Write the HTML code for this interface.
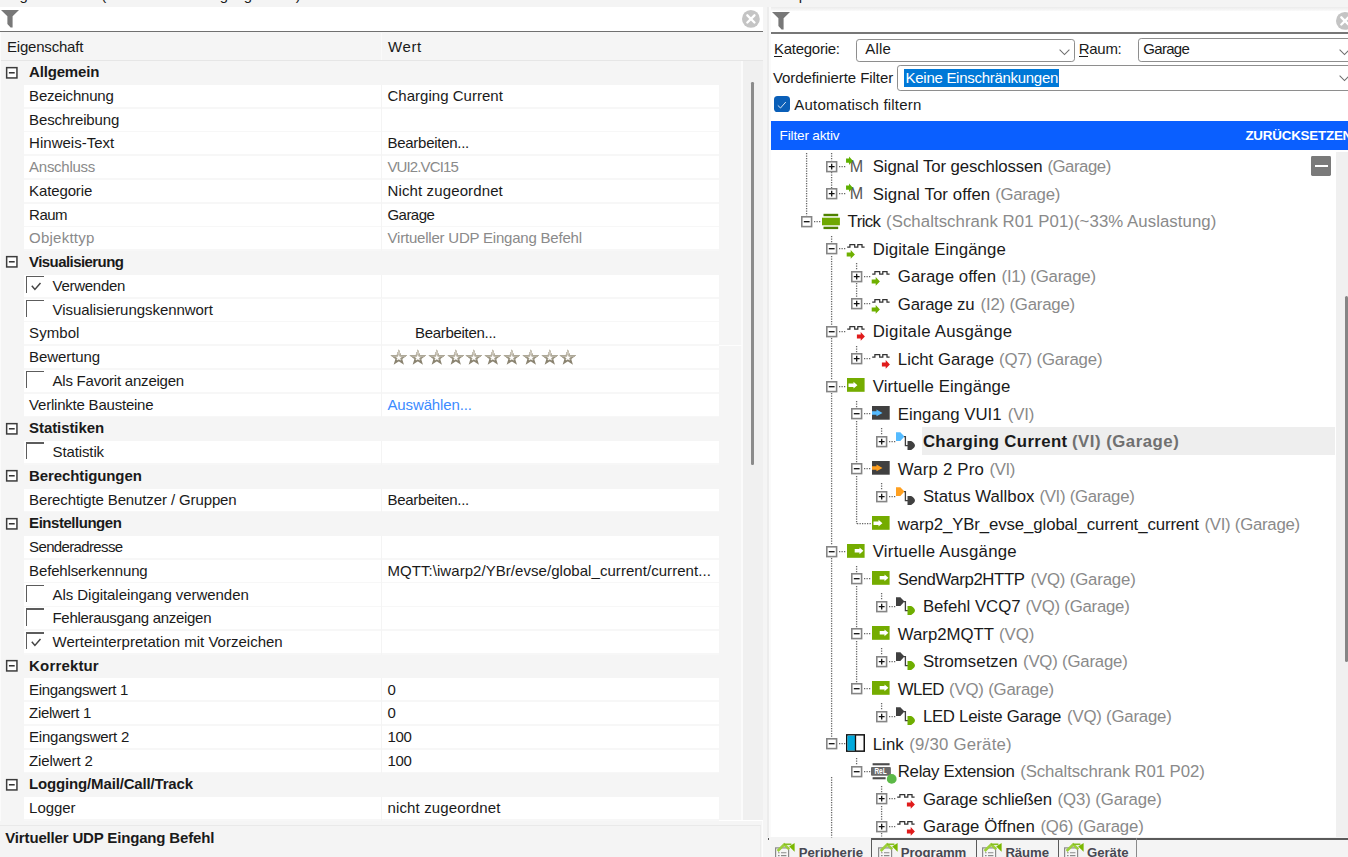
<!DOCTYPE html><html lang="de"><head><meta charset="utf-8"><title>Eigenschaften</title><style>
html,body{margin:0;padding:0;}
body{width:1348px;height:857px;overflow:hidden;position:relative;background:#f5f5f5;font-family:"Liberation Sans", sans-serif;}
#root{position:absolute;left:0;top:0;width:1348px;height:857px;overflow:hidden;}
#root div{position:absolute;box-sizing:border-box;}
#root svg{position:absolute;overflow:visible;}
.t{position:absolute;white-space:pre;line-height:20px;}
</style></head><body><div id="root"><div style="left:0.00px;top:0.00px;width:1348.00px;height:7.00px;background:#f4f4f4;"></div><div style="left:0.00px;top:7.40px;width:762.60px;height:23.40px;background:#ffffff;"></div><div style="left:0.00px;top:30.60px;width:762.60px;height:1.50px;background:#707070;"></div><div style="left:0.00px;top:32.10px;width:762.60px;height:28.00px;background:#f5f5f5;"></div><div style="left:0.00px;top:59.70px;width:762.60px;height:1.00px;background:#e6e6e6;"></div><div style="left:380.80px;top:33.00px;width:1.20px;height:27.00px;background:#fafafa;"></div><div style="left:23.60px;top:84.94px;width:357.60px;height:22.04px;background:#fff;"></div><div style="left:382.40px;top:84.94px;width:336.40px;height:22.04px;background:#fff;"></div><div style="left:23.60px;top:106.98px;width:695.20px;height:1.70px;background:#f7f7f7;"></div><div style="left:381.00px;top:84.84px;width:1.40px;height:23.74px;background:#f4f4f4;"></div><div style="left:23.60px;top:108.68px;width:357.60px;height:22.04px;background:#fff;"></div><div style="left:382.40px;top:108.68px;width:336.40px;height:22.04px;background:#fff;"></div><div style="left:23.60px;top:130.72px;width:695.20px;height:1.70px;background:#f7f7f7;"></div><div style="left:381.00px;top:108.58px;width:1.40px;height:23.74px;background:#f4f4f4;"></div><div style="left:23.60px;top:132.42px;width:357.60px;height:22.04px;background:#fff;"></div><div style="left:382.40px;top:132.42px;width:336.40px;height:22.04px;background:#fff;"></div><div style="left:23.60px;top:154.46px;width:695.20px;height:1.70px;background:#f7f7f7;"></div><div style="left:381.00px;top:132.32px;width:1.40px;height:23.74px;background:#f4f4f4;"></div><div style="left:23.60px;top:156.16px;width:357.60px;height:22.04px;background:#fff;"></div><div style="left:382.40px;top:156.16px;width:336.40px;height:22.04px;background:#fff;"></div><div style="left:23.60px;top:178.20px;width:695.20px;height:1.70px;background:#f7f7f7;"></div><div style="left:381.00px;top:156.06px;width:1.40px;height:23.74px;background:#f4f4f4;"></div><div style="left:23.60px;top:179.90px;width:357.60px;height:22.04px;background:#fff;"></div><div style="left:382.40px;top:179.90px;width:336.40px;height:22.04px;background:#fff;"></div><div style="left:23.60px;top:201.94px;width:695.20px;height:1.70px;background:#f7f7f7;"></div><div style="left:381.00px;top:179.80px;width:1.40px;height:23.74px;background:#f4f4f4;"></div><div style="left:23.60px;top:203.64px;width:357.60px;height:22.04px;background:#fff;"></div><div style="left:382.40px;top:203.64px;width:336.40px;height:22.04px;background:#fff;"></div><div style="left:23.60px;top:225.68px;width:695.20px;height:1.70px;background:#f7f7f7;"></div><div style="left:381.00px;top:203.54px;width:1.40px;height:23.74px;background:#f4f4f4;"></div><div style="left:23.60px;top:227.38px;width:357.60px;height:22.04px;background:#fff;"></div><div style="left:382.40px;top:227.38px;width:336.40px;height:22.04px;background:#fff;"></div><div style="left:23.60px;top:249.42px;width:695.20px;height:1.70px;background:#f7f7f7;"></div><div style="left:381.00px;top:227.28px;width:1.40px;height:23.74px;background:#f4f4f4;"></div><div style="left:23.60px;top:274.86px;width:357.60px;height:22.04px;background:#fff;"></div><div style="left:382.40px;top:274.86px;width:336.40px;height:22.04px;background:#fff;"></div><div style="left:23.60px;top:296.90px;width:695.20px;height:1.70px;background:#f7f7f7;"></div><div style="left:381.00px;top:274.76px;width:1.40px;height:23.74px;background:#f4f4f4;"></div><div style="left:26.10px;top:276.03px;width:17.60px;height:17.20px;background:#fff;"></div><div style="left:26.10px;top:276.03px;width:17.60px;height:1.40px;background:#5c5c5c;"></div><div style="left:26.10px;top:276.03px;width:1.40px;height:17.20px;background:#5c5c5c;"></div><div style="left:23.60px;top:298.60px;width:357.60px;height:22.04px;background:#fff;"></div><div style="left:382.40px;top:298.60px;width:336.40px;height:22.04px;background:#fff;"></div><div style="left:23.60px;top:320.64px;width:695.20px;height:1.70px;background:#f7f7f7;"></div><div style="left:381.00px;top:298.50px;width:1.40px;height:23.74px;background:#f4f4f4;"></div><div style="left:26.10px;top:299.77px;width:17.60px;height:17.20px;background:#fff;"></div><div style="left:26.10px;top:299.77px;width:17.60px;height:1.40px;background:#5c5c5c;"></div><div style="left:26.10px;top:299.77px;width:1.40px;height:17.20px;background:#5c5c5c;"></div><div style="left:23.60px;top:322.34px;width:357.60px;height:22.04px;background:#fff;"></div><div style="left:382.40px;top:322.34px;width:336.40px;height:22.04px;background:#fff;"></div><div style="left:23.60px;top:344.38px;width:695.20px;height:1.70px;background:#f7f7f7;"></div><div style="left:381.00px;top:322.24px;width:1.40px;height:23.74px;background:#f4f4f4;"></div><div style="left:23.60px;top:346.08px;width:357.60px;height:22.04px;background:#fff;"></div><div style="left:382.40px;top:346.08px;width:336.40px;height:22.04px;background:#fff;"></div><div style="left:23.60px;top:368.12px;width:695.20px;height:1.70px;background:#f7f7f7;"></div><div style="left:381.00px;top:345.98px;width:1.40px;height:23.74px;background:#f4f4f4;"></div><div style="left:23.60px;top:369.82px;width:357.60px;height:22.04px;background:#fff;"></div><div style="left:382.40px;top:369.82px;width:336.40px;height:22.04px;background:#fff;"></div><div style="left:23.60px;top:391.86px;width:695.20px;height:1.70px;background:#f7f7f7;"></div><div style="left:381.00px;top:369.72px;width:1.40px;height:23.74px;background:#f4f4f4;"></div><div style="left:26.10px;top:370.99px;width:17.60px;height:17.20px;background:#fff;"></div><div style="left:26.10px;top:370.99px;width:17.60px;height:1.40px;background:#5c5c5c;"></div><div style="left:26.10px;top:370.99px;width:1.40px;height:17.20px;background:#5c5c5c;"></div><div style="left:23.60px;top:393.56px;width:357.60px;height:22.04px;background:#fff;"></div><div style="left:382.40px;top:393.56px;width:336.40px;height:22.04px;background:#fff;"></div><div style="left:23.60px;top:415.60px;width:695.20px;height:1.70px;background:#f7f7f7;"></div><div style="left:381.00px;top:393.46px;width:1.40px;height:23.74px;background:#f4f4f4;"></div><div style="left:23.60px;top:441.04px;width:357.60px;height:22.04px;background:#fff;"></div><div style="left:382.40px;top:441.04px;width:336.40px;height:22.04px;background:#fff;"></div><div style="left:23.60px;top:463.08px;width:695.20px;height:1.70px;background:#f7f7f7;"></div><div style="left:381.00px;top:440.94px;width:1.40px;height:23.74px;background:#f4f4f4;"></div><div style="left:26.10px;top:442.21px;width:17.60px;height:17.20px;background:#fff;"></div><div style="left:26.10px;top:442.21px;width:17.60px;height:1.40px;background:#5c5c5c;"></div><div style="left:26.10px;top:442.21px;width:1.40px;height:17.20px;background:#5c5c5c;"></div><div style="left:23.60px;top:488.52px;width:357.60px;height:22.04px;background:#fff;"></div><div style="left:382.40px;top:488.52px;width:336.40px;height:22.04px;background:#fff;"></div><div style="left:23.60px;top:510.56px;width:695.20px;height:1.70px;background:#f7f7f7;"></div><div style="left:381.00px;top:488.42px;width:1.40px;height:23.74px;background:#f4f4f4;"></div><div style="left:23.60px;top:536.00px;width:357.60px;height:22.04px;background:#fff;"></div><div style="left:382.40px;top:536.00px;width:336.40px;height:22.04px;background:#fff;"></div><div style="left:23.60px;top:558.04px;width:695.20px;height:1.70px;background:#f7f7f7;"></div><div style="left:381.00px;top:535.90px;width:1.40px;height:23.74px;background:#f4f4f4;"></div><div style="left:23.60px;top:559.74px;width:357.60px;height:22.04px;background:#fff;"></div><div style="left:382.40px;top:559.74px;width:336.40px;height:22.04px;background:#fff;"></div><div style="left:23.60px;top:581.78px;width:695.20px;height:1.70px;background:#f7f7f7;"></div><div style="left:381.00px;top:559.64px;width:1.40px;height:23.74px;background:#f4f4f4;"></div><div style="left:23.60px;top:583.48px;width:357.60px;height:22.04px;background:#fff;"></div><div style="left:382.40px;top:583.48px;width:336.40px;height:22.04px;background:#fff;"></div><div style="left:23.60px;top:605.52px;width:695.20px;height:1.70px;background:#f7f7f7;"></div><div style="left:381.00px;top:583.38px;width:1.40px;height:23.74px;background:#f4f4f4;"></div><div style="left:26.10px;top:584.65px;width:17.60px;height:17.20px;background:#fff;"></div><div style="left:26.10px;top:584.65px;width:17.60px;height:1.40px;background:#5c5c5c;"></div><div style="left:26.10px;top:584.65px;width:1.40px;height:17.20px;background:#5c5c5c;"></div><div style="left:23.60px;top:607.22px;width:357.60px;height:22.04px;background:#fff;"></div><div style="left:382.40px;top:607.22px;width:336.40px;height:22.04px;background:#fff;"></div><div style="left:23.60px;top:629.26px;width:695.20px;height:1.70px;background:#f7f7f7;"></div><div style="left:381.00px;top:607.12px;width:1.40px;height:23.74px;background:#f4f4f4;"></div><div style="left:26.10px;top:608.39px;width:17.60px;height:17.20px;background:#fff;"></div><div style="left:26.10px;top:608.39px;width:17.60px;height:1.40px;background:#5c5c5c;"></div><div style="left:26.10px;top:608.39px;width:1.40px;height:17.20px;background:#5c5c5c;"></div><div style="left:23.60px;top:630.96px;width:357.60px;height:22.04px;background:#fff;"></div><div style="left:382.40px;top:630.96px;width:336.40px;height:22.04px;background:#fff;"></div><div style="left:23.60px;top:653.00px;width:695.20px;height:1.70px;background:#f7f7f7;"></div><div style="left:381.00px;top:630.86px;width:1.40px;height:23.74px;background:#f4f4f4;"></div><div style="left:26.10px;top:632.13px;width:17.60px;height:17.20px;background:#fff;"></div><div style="left:26.10px;top:632.13px;width:17.60px;height:1.40px;background:#5c5c5c;"></div><div style="left:26.10px;top:632.13px;width:1.40px;height:17.20px;background:#5c5c5c;"></div><div style="left:23.60px;top:678.44px;width:357.60px;height:22.04px;background:#fff;"></div><div style="left:382.40px;top:678.44px;width:336.40px;height:22.04px;background:#fff;"></div><div style="left:23.60px;top:700.48px;width:695.20px;height:1.70px;background:#f7f7f7;"></div><div style="left:381.00px;top:678.34px;width:1.40px;height:23.74px;background:#f4f4f4;"></div><div style="left:23.60px;top:702.18px;width:357.60px;height:22.04px;background:#fff;"></div><div style="left:382.40px;top:702.18px;width:336.40px;height:22.04px;background:#fff;"></div><div style="left:23.60px;top:724.22px;width:695.20px;height:1.70px;background:#f7f7f7;"></div><div style="left:381.00px;top:702.08px;width:1.40px;height:23.74px;background:#f4f4f4;"></div><div style="left:23.60px;top:725.92px;width:357.60px;height:22.04px;background:#fff;"></div><div style="left:382.40px;top:725.92px;width:336.40px;height:22.04px;background:#fff;"></div><div style="left:23.60px;top:747.96px;width:695.20px;height:1.70px;background:#f7f7f7;"></div><div style="left:381.00px;top:725.82px;width:1.40px;height:23.74px;background:#f4f4f4;"></div><div style="left:23.60px;top:749.66px;width:357.60px;height:22.04px;background:#fff;"></div><div style="left:382.40px;top:749.66px;width:336.40px;height:22.04px;background:#fff;"></div><div style="left:23.60px;top:771.70px;width:695.20px;height:1.70px;background:#f7f7f7;"></div><div style="left:381.00px;top:749.56px;width:1.40px;height:23.74px;background:#f4f4f4;"></div><div style="left:23.60px;top:797.14px;width:357.60px;height:22.04px;background:#fff;"></div><div style="left:382.40px;top:797.14px;width:336.40px;height:22.04px;background:#fff;"></div><div style="left:23.60px;top:819.18px;width:695.20px;height:1.70px;background:#f7f7f7;"></div><div style="left:381.00px;top:797.04px;width:1.40px;height:23.74px;background:#f4f4f4;"></div><div style="left:741.30px;top:60.70px;width:1.30px;height:759.00px;background:#fbfbfb;"></div><div style="left:742.60px;top:60.70px;width:20.00px;height:759.00px;background:#f0f0f0;"></div><div style="left:751.00px;top:82.00px;width:2.60px;height:383.00px;background:#8b8b8b;border-radius:1.3px;"></div><div style="left:718.60px;top:344.88px;width:23.00px;height:1.00px;background:#fdfdfd;"></div><div style="left:718.80px;top:819.70px;width:43.80px;height:1.20px;background:#ffffff;"></div><div style="left:0.00px;top:32.20px;width:1.10px;height:826.00px;background:#fbfbfb;"></div><div style="left:0.00px;top:820.90px;width:768.50px;height:37.00px;background:#f5f5f5;"></div><div style="left:0.00px;top:825.20px;width:761.20px;height:34.00px;background:#f4f4f4;border-top:1.1px solid #e9e9e9;border-right:1.1px solid #ececec;"></div><div style="left:762.30px;top:820.90px;width:1.10px;height:37.00px;background:#fcfcfc;"></div><div style="left:762.60px;top:7.00px;width:4.60px;height:851.00px;background:#f5f5f5;"></div><div style="left:767.10px;top:7.00px;width:2.00px;height:830.00px;background:#ececec;"></div><div style="left:769.00px;top:7.00px;width:2.20px;height:830.00px;background:#fafafa;"></div><div style="left:767.10px;top:836.90px;width:4.00px;height:21.00px;background:#f5f5f5;"></div><div style="left:768.00px;top:838.40px;width:1.30px;height:1.20px;background:#555;"></div><div style="left:771.20px;top:7.00px;width:577.00px;height:851.00px;background:#ffffff;"></div><div style="left:771.20px;top:7.00px;width:577.00px;height:3.90px;background:linear-gradient(#ebebeb,#fafafa);"></div><div style="left:771.20px;top:31.90px;width:577.00px;height:1.70px;background:#777777;"></div><div style="left:773.90px;top:56.00px;width:8.40px;height:1.10px;background:#1a1a1a;"></div><div style="left:856.4px;top:38.6px;width:218.6px;height:23.4px;background:#fff;border:1.15px solid #8e8e8e;border-radius:3.2px;"></div><div style="left:1078.90px;top:56.00px;width:9.00px;height:1.10px;background:#1a1a1a;"></div><div style="left:1137.6px;top:38.4px;width:230px;height:23.8px;background:#fff;border:1.15px solid #8e8e8e;border-radius:3.2px;"></div><div style="left:896.5px;top:64.9px;width:470px;height:26.2px;background:#fff;border:1.15px solid #8e8e8e;border-radius:3.2px;"></div><div style="left:903.60px;top:68.90px;width:155.30px;height:18.60px;background:#0078d7;"></div><div style="left:773.90px;top:96.10px;width:16.20px;height:16.10px;background:#0a5fb8;border-radius:3.6px;"></div><div style="left:771.20px;top:121.00px;width:577.00px;height:28.80px;background:#0a5fff;"></div><div style="left:1336.20px;top:152.20px;width:12.00px;height:685.00px;background:#f0f0f0;"></div><div style="left:1345.00px;top:296.00px;width:3.20px;height:365.50px;background:#858585;border-radius:1.5px;"></div><div style="left:1311.40px;top:156.10px;width:19.50px;height:19.70px;background:#7a7a7a;border-radius:1.4px;"></div><div style="left:1315.00px;top:164.90px;width:12.60px;height:2.30px;background:#ffffff;"></div><div style="left:922.00px;top:427.20px;width:412.80px;height:27.60px;background:#eeeeee;"></div><div style="left:771.20px;top:836.90px;width:577.00px;height:21.00px;background:#f4f4f4;"></div><div style="left:871.00px;top:838.30px;width:477.00px;height:1.30px;background:#5a5a5a;"></div><div style="left:870.85px;top:838.30px;width:1.30px;height:20.00px;background:#5a5a5a;"></div><div style="left:975.85px;top:838.30px;width:1.30px;height:20.00px;background:#5a5a5a;"></div><div style="left:1057.75px;top:838.30px;width:1.30px;height:20.00px;background:#5a5a5a;"></div><div style="left:1136.20px;top:838.30px;width:1.30px;height:20.00px;background:#8a8a8a;"></div><svg style="left:1.0px;top:9.7px" width="18.0" height="18.0" viewBox="0 0 18 18"><path d="M0 0 H18 L11.6 6.2 V17.6 L9.6 17.6 L6.4 14 V6.2 Z" fill="#787878"/></svg><svg style="left:742.4px;top:9.799999999999999px" width="17.8" height="17.8" viewBox="-10 -10 20 20"><circle r="10" fill="#c4c4c4"/><path d="M-4 -4 L4 4 M4 -4 L-4 4" stroke="#fff" stroke-width="2.6" stroke-linecap="round"/></svg><svg style="left:6.1px;top:66.57px" width="11.6" height="11.6" viewBox="0 0 11.6 11.6"><rect x="0.65" y="0.65" width="10.3" height="10.3" fill="#fff" stroke="#3c3c3c" stroke-width="1.5"/><path d="M2.9 5.8 H8.7" stroke="#222" stroke-width="1.4"/></svg><svg style="left:6.1px;top:256.49px" width="11.6" height="11.6" viewBox="0 0 11.6 11.6"><rect x="0.65" y="0.65" width="10.3" height="10.3" fill="#fff" stroke="#3c3c3c" stroke-width="1.5"/><path d="M2.9 5.8 H8.7" stroke="#222" stroke-width="1.4"/></svg><svg style="left:30.5px;top:281.63px" width="10.4" height="8.4" viewBox="0 0 10.4 8.4"><path d="M0.8 3.8 L3.9 7.4 L9.5 0.9" fill="none" stroke="#444" stroke-width="1.5"/></svg><svg style="left:392.20px;top:350.75px" width="13.6" height="12.6" viewBox="0 0 16 15"><path d="M8 1.2 L9.75 5.9 L14.9 6.0 L10.85 9.1 L12.3 14.0 L8 11.1 L3.7 14.0 L5.15 9.1 L1.1 6.0 L6.25 5.9 Z" fill="#fdfcfa" stroke="#8a8370" stroke-width="2.1" stroke-linejoin="miter"/><svg x="-2" y="-2" width="20" height="12.5" viewBox="-2 -2 20 12.5" style="overflow:hidden"><path d="M8 1.2 L9.75 5.9 L14.9 6.0 L10.85 9.1 L12.3 14.0 L8 11.1 L3.7 14.0 L5.15 9.1 L1.1 6.0 L6.25 5.9 Z" fill="#fdfcfa" stroke="#9d9785" stroke-width="2.1" stroke-linejoin="miter"/></svg><svg x="-2" y="-2" width="20" height="9" viewBox="-2 -2 20 9" style="overflow:hidden"><path d="M8 1.2 L9.75 5.9 L14.9 6.0 L10.85 9.1 L12.3 14.0 L8 11.1 L3.7 14.0 L5.15 9.1 L1.1 6.0 L6.25 5.9 Z" fill="#fdfcfa" stroke="#b3ad9d" stroke-width="2.1" stroke-linejoin="miter"/></svg><svg x="-2" y="-2" width="20" height="6" viewBox="-2 -2 20 6" style="overflow:hidden"><path d="M8 1.2 L9.75 5.9 L14.9 6.0 L10.85 9.1 L12.3 14.0 L8 11.1 L3.7 14.0 L5.15 9.1 L1.1 6.0 L6.25 5.9 Z" fill="#fdfcfa" stroke="#cdc8bb" stroke-width="2.1" stroke-linejoin="miter"/></svg></svg><svg style="left:411.00px;top:350.75px" width="13.6" height="12.6" viewBox="0 0 16 15"><path d="M8 1.2 L9.75 5.9 L14.9 6.0 L10.85 9.1 L12.3 14.0 L8 11.1 L3.7 14.0 L5.15 9.1 L1.1 6.0 L6.25 5.9 Z" fill="#fdfcfa" stroke="#8a8370" stroke-width="2.1" stroke-linejoin="miter"/><svg x="-2" y="-2" width="20" height="12.5" viewBox="-2 -2 20 12.5" style="overflow:hidden"><path d="M8 1.2 L9.75 5.9 L14.9 6.0 L10.85 9.1 L12.3 14.0 L8 11.1 L3.7 14.0 L5.15 9.1 L1.1 6.0 L6.25 5.9 Z" fill="#fdfcfa" stroke="#9d9785" stroke-width="2.1" stroke-linejoin="miter"/></svg><svg x="-2" y="-2" width="20" height="9" viewBox="-2 -2 20 9" style="overflow:hidden"><path d="M8 1.2 L9.75 5.9 L14.9 6.0 L10.85 9.1 L12.3 14.0 L8 11.1 L3.7 14.0 L5.15 9.1 L1.1 6.0 L6.25 5.9 Z" fill="#fdfcfa" stroke="#b3ad9d" stroke-width="2.1" stroke-linejoin="miter"/></svg><svg x="-2" y="-2" width="20" height="6" viewBox="-2 -2 20 6" style="overflow:hidden"><path d="M8 1.2 L9.75 5.9 L14.9 6.0 L10.85 9.1 L12.3 14.0 L8 11.1 L3.7 14.0 L5.15 9.1 L1.1 6.0 L6.25 5.9 Z" fill="#fdfcfa" stroke="#cdc8bb" stroke-width="2.1" stroke-linejoin="miter"/></svg></svg><svg style="left:429.80px;top:350.75px" width="13.6" height="12.6" viewBox="0 0 16 15"><path d="M8 1.2 L9.75 5.9 L14.9 6.0 L10.85 9.1 L12.3 14.0 L8 11.1 L3.7 14.0 L5.15 9.1 L1.1 6.0 L6.25 5.9 Z" fill="#fdfcfa" stroke="#8a8370" stroke-width="2.1" stroke-linejoin="miter"/><svg x="-2" y="-2" width="20" height="12.5" viewBox="-2 -2 20 12.5" style="overflow:hidden"><path d="M8 1.2 L9.75 5.9 L14.9 6.0 L10.85 9.1 L12.3 14.0 L8 11.1 L3.7 14.0 L5.15 9.1 L1.1 6.0 L6.25 5.9 Z" fill="#fdfcfa" stroke="#9d9785" stroke-width="2.1" stroke-linejoin="miter"/></svg><svg x="-2" y="-2" width="20" height="9" viewBox="-2 -2 20 9" style="overflow:hidden"><path d="M8 1.2 L9.75 5.9 L14.9 6.0 L10.85 9.1 L12.3 14.0 L8 11.1 L3.7 14.0 L5.15 9.1 L1.1 6.0 L6.25 5.9 Z" fill="#fdfcfa" stroke="#b3ad9d" stroke-width="2.1" stroke-linejoin="miter"/></svg><svg x="-2" y="-2" width="20" height="6" viewBox="-2 -2 20 6" style="overflow:hidden"><path d="M8 1.2 L9.75 5.9 L14.9 6.0 L10.85 9.1 L12.3 14.0 L8 11.1 L3.7 14.0 L5.15 9.1 L1.1 6.0 L6.25 5.9 Z" fill="#fdfcfa" stroke="#cdc8bb" stroke-width="2.1" stroke-linejoin="miter"/></svg></svg><svg style="left:448.60px;top:350.75px" width="13.6" height="12.6" viewBox="0 0 16 15"><path d="M8 1.2 L9.75 5.9 L14.9 6.0 L10.85 9.1 L12.3 14.0 L8 11.1 L3.7 14.0 L5.15 9.1 L1.1 6.0 L6.25 5.9 Z" fill="#fdfcfa" stroke="#8a8370" stroke-width="2.1" stroke-linejoin="miter"/><svg x="-2" y="-2" width="20" height="12.5" viewBox="-2 -2 20 12.5" style="overflow:hidden"><path d="M8 1.2 L9.75 5.9 L14.9 6.0 L10.85 9.1 L12.3 14.0 L8 11.1 L3.7 14.0 L5.15 9.1 L1.1 6.0 L6.25 5.9 Z" fill="#fdfcfa" stroke="#9d9785" stroke-width="2.1" stroke-linejoin="miter"/></svg><svg x="-2" y="-2" width="20" height="9" viewBox="-2 -2 20 9" style="overflow:hidden"><path d="M8 1.2 L9.75 5.9 L14.9 6.0 L10.85 9.1 L12.3 14.0 L8 11.1 L3.7 14.0 L5.15 9.1 L1.1 6.0 L6.25 5.9 Z" fill="#fdfcfa" stroke="#b3ad9d" stroke-width="2.1" stroke-linejoin="miter"/></svg><svg x="-2" y="-2" width="20" height="6" viewBox="-2 -2 20 6" style="overflow:hidden"><path d="M8 1.2 L9.75 5.9 L14.9 6.0 L10.85 9.1 L12.3 14.0 L8 11.1 L3.7 14.0 L5.15 9.1 L1.1 6.0 L6.25 5.9 Z" fill="#fdfcfa" stroke="#cdc8bb" stroke-width="2.1" stroke-linejoin="miter"/></svg></svg><svg style="left:467.40px;top:350.75px" width="13.6" height="12.6" viewBox="0 0 16 15"><path d="M8 1.2 L9.75 5.9 L14.9 6.0 L10.85 9.1 L12.3 14.0 L8 11.1 L3.7 14.0 L5.15 9.1 L1.1 6.0 L6.25 5.9 Z" fill="#fdfcfa" stroke="#8a8370" stroke-width="2.1" stroke-linejoin="miter"/><svg x="-2" y="-2" width="20" height="12.5" viewBox="-2 -2 20 12.5" style="overflow:hidden"><path d="M8 1.2 L9.75 5.9 L14.9 6.0 L10.85 9.1 L12.3 14.0 L8 11.1 L3.7 14.0 L5.15 9.1 L1.1 6.0 L6.25 5.9 Z" fill="#fdfcfa" stroke="#9d9785" stroke-width="2.1" stroke-linejoin="miter"/></svg><svg x="-2" y="-2" width="20" height="9" viewBox="-2 -2 20 9" style="overflow:hidden"><path d="M8 1.2 L9.75 5.9 L14.9 6.0 L10.85 9.1 L12.3 14.0 L8 11.1 L3.7 14.0 L5.15 9.1 L1.1 6.0 L6.25 5.9 Z" fill="#fdfcfa" stroke="#b3ad9d" stroke-width="2.1" stroke-linejoin="miter"/></svg><svg x="-2" y="-2" width="20" height="6" viewBox="-2 -2 20 6" style="overflow:hidden"><path d="M8 1.2 L9.75 5.9 L14.9 6.0 L10.85 9.1 L12.3 14.0 L8 11.1 L3.7 14.0 L5.15 9.1 L1.1 6.0 L6.25 5.9 Z" fill="#fdfcfa" stroke="#cdc8bb" stroke-width="2.1" stroke-linejoin="miter"/></svg></svg><svg style="left:486.20px;top:350.75px" width="13.6" height="12.6" viewBox="0 0 16 15"><path d="M8 1.2 L9.75 5.9 L14.9 6.0 L10.85 9.1 L12.3 14.0 L8 11.1 L3.7 14.0 L5.15 9.1 L1.1 6.0 L6.25 5.9 Z" fill="#fdfcfa" stroke="#8a8370" stroke-width="2.1" stroke-linejoin="miter"/><svg x="-2" y="-2" width="20" height="12.5" viewBox="-2 -2 20 12.5" style="overflow:hidden"><path d="M8 1.2 L9.75 5.9 L14.9 6.0 L10.85 9.1 L12.3 14.0 L8 11.1 L3.7 14.0 L5.15 9.1 L1.1 6.0 L6.25 5.9 Z" fill="#fdfcfa" stroke="#9d9785" stroke-width="2.1" stroke-linejoin="miter"/></svg><svg x="-2" y="-2" width="20" height="9" viewBox="-2 -2 20 9" style="overflow:hidden"><path d="M8 1.2 L9.75 5.9 L14.9 6.0 L10.85 9.1 L12.3 14.0 L8 11.1 L3.7 14.0 L5.15 9.1 L1.1 6.0 L6.25 5.9 Z" fill="#fdfcfa" stroke="#b3ad9d" stroke-width="2.1" stroke-linejoin="miter"/></svg><svg x="-2" y="-2" width="20" height="6" viewBox="-2 -2 20 6" style="overflow:hidden"><path d="M8 1.2 L9.75 5.9 L14.9 6.0 L10.85 9.1 L12.3 14.0 L8 11.1 L3.7 14.0 L5.15 9.1 L1.1 6.0 L6.25 5.9 Z" fill="#fdfcfa" stroke="#cdc8bb" stroke-width="2.1" stroke-linejoin="miter"/></svg></svg><svg style="left:505.00px;top:350.75px" width="13.6" height="12.6" viewBox="0 0 16 15"><path d="M8 1.2 L9.75 5.9 L14.9 6.0 L10.85 9.1 L12.3 14.0 L8 11.1 L3.7 14.0 L5.15 9.1 L1.1 6.0 L6.25 5.9 Z" fill="#fdfcfa" stroke="#8a8370" stroke-width="2.1" stroke-linejoin="miter"/><svg x="-2" y="-2" width="20" height="12.5" viewBox="-2 -2 20 12.5" style="overflow:hidden"><path d="M8 1.2 L9.75 5.9 L14.9 6.0 L10.85 9.1 L12.3 14.0 L8 11.1 L3.7 14.0 L5.15 9.1 L1.1 6.0 L6.25 5.9 Z" fill="#fdfcfa" stroke="#9d9785" stroke-width="2.1" stroke-linejoin="miter"/></svg><svg x="-2" y="-2" width="20" height="9" viewBox="-2 -2 20 9" style="overflow:hidden"><path d="M8 1.2 L9.75 5.9 L14.9 6.0 L10.85 9.1 L12.3 14.0 L8 11.1 L3.7 14.0 L5.15 9.1 L1.1 6.0 L6.25 5.9 Z" fill="#fdfcfa" stroke="#b3ad9d" stroke-width="2.1" stroke-linejoin="miter"/></svg><svg x="-2" y="-2" width="20" height="6" viewBox="-2 -2 20 6" style="overflow:hidden"><path d="M8 1.2 L9.75 5.9 L14.9 6.0 L10.85 9.1 L12.3 14.0 L8 11.1 L3.7 14.0 L5.15 9.1 L1.1 6.0 L6.25 5.9 Z" fill="#fdfcfa" stroke="#cdc8bb" stroke-width="2.1" stroke-linejoin="miter"/></svg></svg><svg style="left:523.80px;top:350.75px" width="13.6" height="12.6" viewBox="0 0 16 15"><path d="M8 1.2 L9.75 5.9 L14.9 6.0 L10.85 9.1 L12.3 14.0 L8 11.1 L3.7 14.0 L5.15 9.1 L1.1 6.0 L6.25 5.9 Z" fill="#fdfcfa" stroke="#8a8370" stroke-width="2.1" stroke-linejoin="miter"/><svg x="-2" y="-2" width="20" height="12.5" viewBox="-2 -2 20 12.5" style="overflow:hidden"><path d="M8 1.2 L9.75 5.9 L14.9 6.0 L10.85 9.1 L12.3 14.0 L8 11.1 L3.7 14.0 L5.15 9.1 L1.1 6.0 L6.25 5.9 Z" fill="#fdfcfa" stroke="#9d9785" stroke-width="2.1" stroke-linejoin="miter"/></svg><svg x="-2" y="-2" width="20" height="9" viewBox="-2 -2 20 9" style="overflow:hidden"><path d="M8 1.2 L9.75 5.9 L14.9 6.0 L10.85 9.1 L12.3 14.0 L8 11.1 L3.7 14.0 L5.15 9.1 L1.1 6.0 L6.25 5.9 Z" fill="#fdfcfa" stroke="#b3ad9d" stroke-width="2.1" stroke-linejoin="miter"/></svg><svg x="-2" y="-2" width="20" height="6" viewBox="-2 -2 20 6" style="overflow:hidden"><path d="M8 1.2 L9.75 5.9 L14.9 6.0 L10.85 9.1 L12.3 14.0 L8 11.1 L3.7 14.0 L5.15 9.1 L1.1 6.0 L6.25 5.9 Z" fill="#fdfcfa" stroke="#cdc8bb" stroke-width="2.1" stroke-linejoin="miter"/></svg></svg><svg style="left:542.60px;top:350.75px" width="13.6" height="12.6" viewBox="0 0 16 15"><path d="M8 1.2 L9.75 5.9 L14.9 6.0 L10.85 9.1 L12.3 14.0 L8 11.1 L3.7 14.0 L5.15 9.1 L1.1 6.0 L6.25 5.9 Z" fill="#fdfcfa" stroke="#8a8370" stroke-width="2.1" stroke-linejoin="miter"/><svg x="-2" y="-2" width="20" height="12.5" viewBox="-2 -2 20 12.5" style="overflow:hidden"><path d="M8 1.2 L9.75 5.9 L14.9 6.0 L10.85 9.1 L12.3 14.0 L8 11.1 L3.7 14.0 L5.15 9.1 L1.1 6.0 L6.25 5.9 Z" fill="#fdfcfa" stroke="#9d9785" stroke-width="2.1" stroke-linejoin="miter"/></svg><svg x="-2" y="-2" width="20" height="9" viewBox="-2 -2 20 9" style="overflow:hidden"><path d="M8 1.2 L9.75 5.9 L14.9 6.0 L10.85 9.1 L12.3 14.0 L8 11.1 L3.7 14.0 L5.15 9.1 L1.1 6.0 L6.25 5.9 Z" fill="#fdfcfa" stroke="#b3ad9d" stroke-width="2.1" stroke-linejoin="miter"/></svg><svg x="-2" y="-2" width="20" height="6" viewBox="-2 -2 20 6" style="overflow:hidden"><path d="M8 1.2 L9.75 5.9 L14.9 6.0 L10.85 9.1 L12.3 14.0 L8 11.1 L3.7 14.0 L5.15 9.1 L1.1 6.0 L6.25 5.9 Z" fill="#fdfcfa" stroke="#cdc8bb" stroke-width="2.1" stroke-linejoin="miter"/></svg></svg><svg style="left:561.40px;top:350.75px" width="13.6" height="12.6" viewBox="0 0 16 15"><path d="M8 1.2 L9.75 5.9 L14.9 6.0 L10.85 9.1 L12.3 14.0 L8 11.1 L3.7 14.0 L5.15 9.1 L1.1 6.0 L6.25 5.9 Z" fill="#fdfcfa" stroke="#8a8370" stroke-width="2.1" stroke-linejoin="miter"/><svg x="-2" y="-2" width="20" height="12.5" viewBox="-2 -2 20 12.5" style="overflow:hidden"><path d="M8 1.2 L9.75 5.9 L14.9 6.0 L10.85 9.1 L12.3 14.0 L8 11.1 L3.7 14.0 L5.15 9.1 L1.1 6.0 L6.25 5.9 Z" fill="#fdfcfa" stroke="#9d9785" stroke-width="2.1" stroke-linejoin="miter"/></svg><svg x="-2" y="-2" width="20" height="9" viewBox="-2 -2 20 9" style="overflow:hidden"><path d="M8 1.2 L9.75 5.9 L14.9 6.0 L10.85 9.1 L12.3 14.0 L8 11.1 L3.7 14.0 L5.15 9.1 L1.1 6.0 L6.25 5.9 Z" fill="#fdfcfa" stroke="#b3ad9d" stroke-width="2.1" stroke-linejoin="miter"/></svg><svg x="-2" y="-2" width="20" height="6" viewBox="-2 -2 20 6" style="overflow:hidden"><path d="M8 1.2 L9.75 5.9 L14.9 6.0 L10.85 9.1 L12.3 14.0 L8 11.1 L3.7 14.0 L5.15 9.1 L1.1 6.0 L6.25 5.9 Z" fill="#fdfcfa" stroke="#cdc8bb" stroke-width="2.1" stroke-linejoin="miter"/></svg></svg><svg style="left:6.1px;top:422.67px" width="11.6" height="11.6" viewBox="0 0 11.6 11.6"><rect x="0.65" y="0.65" width="10.3" height="10.3" fill="#fff" stroke="#3c3c3c" stroke-width="1.5"/><path d="M2.9 5.8 H8.7" stroke="#222" stroke-width="1.4"/></svg><svg style="left:6.1px;top:470.15px" width="11.6" height="11.6" viewBox="0 0 11.6 11.6"><rect x="0.65" y="0.65" width="10.3" height="10.3" fill="#fff" stroke="#3c3c3c" stroke-width="1.5"/><path d="M2.9 5.8 H8.7" stroke="#222" stroke-width="1.4"/></svg><svg style="left:6.1px;top:517.63px" width="11.6" height="11.6" viewBox="0 0 11.6 11.6"><rect x="0.65" y="0.65" width="10.3" height="10.3" fill="#fff" stroke="#3c3c3c" stroke-width="1.5"/><path d="M2.9 5.8 H8.7" stroke="#222" stroke-width="1.4"/></svg><svg style="left:30.5px;top:637.73px" width="10.4" height="8.4" viewBox="0 0 10.4 8.4"><path d="M0.8 3.8 L3.9 7.4 L9.5 0.9" fill="none" stroke="#444" stroke-width="1.5"/></svg><svg style="left:6.1px;top:660.07px" width="11.6" height="11.6" viewBox="0 0 11.6 11.6"><rect x="0.65" y="0.65" width="10.3" height="10.3" fill="#fff" stroke="#3c3c3c" stroke-width="1.5"/><path d="M2.9 5.8 H8.7" stroke="#222" stroke-width="1.4"/></svg><svg style="left:6.1px;top:778.77px" width="11.6" height="11.6" viewBox="0 0 11.6 11.6"><rect x="0.65" y="0.65" width="10.3" height="10.3" fill="#fff" stroke="#3c3c3c" stroke-width="1.5"/><path d="M2.9 5.8 H8.7" stroke="#222" stroke-width="1.4"/></svg><svg style="left:772.2px;top:11.6px" width="18.0" height="18.0" viewBox="0 0 18 18"><path d="M0 0 H18 L11.6 6.2 V17.6 L9.6 17.6 L6.4 14 V6.2 Z" fill="#787878"/></svg><svg style="left:1336.1px;top:11.700000000000001px" width="17.8" height="17.8" viewBox="-10 -10 20 20"><circle r="10" fill="#c4c4c4"/><path d="M-4 -4 L4 4 M4 -4 L-4 4" stroke="#fff" stroke-width="2.6" stroke-linecap="round"/></svg><svg style="left:1058.5px;top:49.099999999999994px" width="11" height="6.5" viewBox="0 0 11 6.5"><path d="M0.6 0.6 L5.5 5.6 L10.4 0.6" fill="none" stroke="#6e6e6e" stroke-width="1.05"/></svg><svg style="left:1339.2px;top:49.099999999999994px" width="11" height="6.5" viewBox="0 0 11 6.5"><path d="M0.6 0.6 L5.5 5.6 L10.4 0.6" fill="none" stroke="#6e6e6e" stroke-width="1.05"/></svg><svg style="left:1339.2px;top:75.39999999999999px" width="11" height="6.5" viewBox="0 0 11 6.5"><path d="M0.6 0.6 L5.5 5.6 L10.4 0.6" fill="none" stroke="#6e6e6e" stroke-width="1.05"/></svg><svg style="left:777.4px;top:100.6px" width="10" height="8" viewBox="0 0 10 8"><path d="M0.8 4.4 L3.5 7.0 L8.8 1.0" fill="none" stroke="#d8e6f4" stroke-width="1.0"/></svg><svg style="left:806.30px;top:153.00px" width="1.2" height="62.80"><line x1="0.6" y1="0" x2="0.6" y2="62.80" stroke="#666" stroke-width="1.3" stroke-dasharray="1.25 1.25"/></svg><svg style="left:831.25px;top:153.00px" width="1.2" height="7.80"><line x1="0.6" y1="0" x2="0.6" y2="7.80" stroke="#666" stroke-width="1.3" stroke-dasharray="1.25 1.25"/></svg><svg style="left:831.25px;top:172.20px" width="1.2" height="16.10"><line x1="0.6" y1="0" x2="0.6" y2="16.10" stroke="#666" stroke-width="1.3" stroke-dasharray="1.25 1.25"/></svg><svg style="left:831.25px;top:236.00px" width="1.2" height="7.30"><line x1="0.6" y1="0" x2="0.6" y2="7.30" stroke="#666" stroke-width="1.3" stroke-dasharray="1.25 1.25"/></svg><svg style="left:831.25px;top:255.90px" width="1.2" height="69.90"><line x1="0.6" y1="0" x2="0.6" y2="69.90" stroke="#666" stroke-width="1.3" stroke-dasharray="1.25 1.25"/></svg><svg style="left:831.25px;top:338.40px" width="1.2" height="42.40"><line x1="0.6" y1="0" x2="0.6" y2="42.40" stroke="#666" stroke-width="1.3" stroke-dasharray="1.25 1.25"/></svg><svg style="left:831.25px;top:393.40px" width="1.2" height="152.40"><line x1="0.6" y1="0" x2="0.6" y2="152.40" stroke="#666" stroke-width="1.3" stroke-dasharray="1.25 1.25"/></svg><svg style="left:831.25px;top:558.40px" width="1.2" height="179.90"><line x1="0.6" y1="0" x2="0.6" y2="179.90" stroke="#666" stroke-width="1.3" stroke-dasharray="1.25 1.25"/></svg><svg style="left:831.25px;top:776.50px" width="1.2" height="60.40"><line x1="0.6" y1="0" x2="0.6" y2="60.40" stroke="#666" stroke-width="1.3" stroke-dasharray="1.25 1.25"/></svg><svg style="left:856.20px;top:263.20px" width="1.2" height="7.60"><line x1="0.6" y1="0" x2="0.6" y2="7.60" stroke="#666" stroke-width="1.3" stroke-dasharray="1.25 1.25"/></svg><svg style="left:856.20px;top:283.40px" width="1.2" height="14.90"><line x1="0.6" y1="0" x2="0.6" y2="14.90" stroke="#666" stroke-width="1.3" stroke-dasharray="1.25 1.25"/></svg><svg style="left:856.20px;top:345.70px" width="1.2" height="7.60"><line x1="0.6" y1="0" x2="0.6" y2="7.60" stroke="#666" stroke-width="1.3" stroke-dasharray="1.25 1.25"/></svg><svg style="left:856.20px;top:400.70px" width="1.2" height="7.60"><line x1="0.6" y1="0" x2="0.6" y2="7.60" stroke="#666" stroke-width="1.3" stroke-dasharray="1.25 1.25"/></svg><svg style="left:856.20px;top:420.90px" width="1.2" height="42.40"><line x1="0.6" y1="0" x2="0.6" y2="42.40" stroke="#666" stroke-width="1.3" stroke-dasharray="1.25 1.25"/></svg><svg style="left:856.20px;top:475.90px" width="1.2" height="48.10"><line x1="0.6" y1="0" x2="0.6" y2="48.10" stroke="#666" stroke-width="1.3" stroke-dasharray="1.25 1.25"/></svg><svg style="left:856.20px;top:565.70px" width="1.2" height="7.60"><line x1="0.6" y1="0" x2="0.6" y2="7.60" stroke="#666" stroke-width="1.3" stroke-dasharray="1.25 1.25"/></svg><svg style="left:856.20px;top:585.90px" width="1.2" height="42.40"><line x1="0.6" y1="0" x2="0.6" y2="42.40" stroke="#666" stroke-width="1.3" stroke-dasharray="1.25 1.25"/></svg><svg style="left:856.20px;top:640.90px" width="1.2" height="42.40"><line x1="0.6" y1="0" x2="0.6" y2="42.40" stroke="#666" stroke-width="1.3" stroke-dasharray="1.25 1.25"/></svg><svg style="left:856.20px;top:758.20px" width="1.2" height="7.60"><line x1="0.6" y1="0" x2="0.6" y2="7.60" stroke="#666" stroke-width="1.3" stroke-dasharray="1.25 1.25"/></svg><svg style="left:881.15px;top:428.20px" width="1.2" height="7.60"><line x1="0.6" y1="0" x2="0.6" y2="7.60" stroke="#666" stroke-width="1.3" stroke-dasharray="1.25 1.25"/></svg><svg style="left:881.15px;top:483.20px" width="1.2" height="7.60"><line x1="0.6" y1="0" x2="0.6" y2="7.60" stroke="#666" stroke-width="1.3" stroke-dasharray="1.25 1.25"/></svg><svg style="left:881.15px;top:593.20px" width="1.2" height="7.60"><line x1="0.6" y1="0" x2="0.6" y2="7.60" stroke="#666" stroke-width="1.3" stroke-dasharray="1.25 1.25"/></svg><svg style="left:881.15px;top:648.20px" width="1.2" height="7.60"><line x1="0.6" y1="0" x2="0.6" y2="7.60" stroke="#666" stroke-width="1.3" stroke-dasharray="1.25 1.25"/></svg><svg style="left:881.15px;top:703.20px" width="1.2" height="7.60"><line x1="0.6" y1="0" x2="0.6" y2="7.60" stroke="#666" stroke-width="1.3" stroke-dasharray="1.25 1.25"/></svg><svg style="left:881.15px;top:785.70px" width="1.2" height="7.60"><line x1="0.6" y1="0" x2="0.6" y2="7.60" stroke="#666" stroke-width="1.3" stroke-dasharray="1.25 1.25"/></svg><svg style="left:881.15px;top:805.90px" width="1.2" height="14.90"><line x1="0.6" y1="0" x2="0.6" y2="14.90" stroke="#666" stroke-width="1.3" stroke-dasharray="1.25 1.25"/></svg><svg style="left:881.15px;top:833.40px" width="1.2" height="3.50"><line x1="0.6" y1="0" x2="0.6" y2="3.50" stroke="#666" stroke-width="1.3" stroke-dasharray="1.25 1.25"/></svg><svg style="left:839.15px;top:165.90px" width="7.20" height="1.2"><line x1="0" y1="0.6" x2="7.20" y2="0.6" stroke="#666" stroke-width="1.3" stroke-dasharray="1.25 1.25"/></svg><svg style="left:826.15px;top:160.80px" width="11.4" height="11.4" viewBox="0 0 11.4 11.4"><rect x="0.8" y="0.8" width="9.8" height="9.8" fill="#fff" stroke="#858585" stroke-width="1.6"/><path d="M2.8 5.7 H8.6 M5.7 2.8 V8.6" stroke="#111" stroke-width="1.3"/></svg><svg style="left:846.15px;top:155.50px" width="24" height="22" viewBox="0 0 24 22"><text x="3.85" y="16.20" font-family="Liberation Sans, sans-serif" font-size="16.4" fill="#555" textLength="13.4" lengthAdjust="spacingAndGlyphs">M</text><path d="M0.05 2.60 H3.05 V0.40 L6.85 4.70 L3.05 9.00 V6.80 H0.05 Z" fill="#5fb000"/></svg><svg style="left:839.15px;top:193.40px" width="7.20" height="1.2"><line x1="0" y1="0.6" x2="7.20" y2="0.6" stroke="#666" stroke-width="1.3" stroke-dasharray="1.25 1.25"/></svg><svg style="left:826.15px;top:188.30px" width="11.4" height="11.4" viewBox="0 0 11.4 11.4"><rect x="0.8" y="0.8" width="9.8" height="9.8" fill="#fff" stroke="#858585" stroke-width="1.6"/><path d="M2.8 5.7 H8.6 M5.7 2.8 V8.6" stroke="#111" stroke-width="1.3"/></svg><svg style="left:846.15px;top:183.00px" width="24" height="22" viewBox="0 0 24 22"><text x="3.85" y="16.20" font-family="Liberation Sans, sans-serif" font-size="16.4" fill="#555" textLength="13.4" lengthAdjust="spacingAndGlyphs">M</text><path d="M0.05 2.60 H3.05 V0.40 L6.85 4.70 L3.05 9.00 V6.80 H0.05 Z" fill="#5fb000"/></svg><svg style="left:814.20px;top:220.90px" width="7.20" height="1.2"><line x1="0" y1="0.6" x2="7.20" y2="0.6" stroke="#666" stroke-width="1.3" stroke-dasharray="1.25 1.25"/></svg><svg style="left:801.20px;top:215.80px" width="11.4" height="11.4" viewBox="0 0 11.4 11.4"><rect x="0.8" y="0.8" width="9.8" height="9.8" fill="#fff" stroke="#858585" stroke-width="1.6"/><path d="M2.8 5.7 H8.6" stroke="#111" stroke-width="1.3"/></svg><svg style="left:822.40px;top:212.50px" width="18" height="17" viewBox="0 0 18 17"><rect x="1.5" y="0.8" width="14.7" height="2.4" fill="#4f8200"/><rect x="0" y="4.7" width="17.9" height="7.6" fill="#6ea800"/><rect x="1.5" y="13.7" width="14.7" height="2.4" fill="#4f8200"/></svg><svg style="left:839.15px;top:248.40px" width="7.20" height="1.2"><line x1="0" y1="0.6" x2="7.20" y2="0.6" stroke="#666" stroke-width="1.3" stroke-dasharray="1.25 1.25"/></svg><svg style="left:826.15px;top:243.30px" width="11.4" height="11.4" viewBox="0 0 11.4 11.4"><rect x="0.8" y="0.8" width="9.8" height="9.8" fill="#fff" stroke="#858585" stroke-width="1.6"/><path d="M2.8 5.7 H8.6" stroke="#111" stroke-width="1.3"/></svg><svg style="left:847.35px;top:243.60px" width="18" height="16" viewBox="0 0 18 16"><path d="M0.2 3.0 H2.9 V0.7 H7.7 V3.0 H10.8 V0.7 H15 V3.0 H17.6" fill="none" stroke="#333" stroke-width="1.25"/><path d="M-0.30 8.40 H3.70 V6.00 L7.90 10.40 L3.70 14.80 V12.40 H-0.30 Z" fill="#6fb000"/></svg><svg style="left:864.10px;top:275.90px" width="7.20" height="1.2"><line x1="0" y1="0.6" x2="7.20" y2="0.6" stroke="#666" stroke-width="1.3" stroke-dasharray="1.25 1.25"/></svg><svg style="left:851.10px;top:270.80px" width="11.4" height="11.4" viewBox="0 0 11.4 11.4"><rect x="0.8" y="0.8" width="9.8" height="9.8" fill="#fff" stroke="#858585" stroke-width="1.6"/><path d="M2.8 5.7 H8.6 M5.7 2.8 V8.6" stroke="#111" stroke-width="1.3"/></svg><svg style="left:872.30px;top:271.10px" width="18" height="16" viewBox="0 0 18 16"><path d="M0.2 3.0 H2.9 V0.7 H7.7 V3.0 H10.8 V0.7 H15 V3.0 H17.6" fill="none" stroke="#333" stroke-width="1.25"/><path d="M-0.30 8.40 H3.70 V6.00 L7.90 10.40 L3.70 14.80 V12.40 H-0.30 Z" fill="#6fb000"/></svg><svg style="left:864.10px;top:303.40px" width="7.20" height="1.2"><line x1="0" y1="0.6" x2="7.20" y2="0.6" stroke="#666" stroke-width="1.3" stroke-dasharray="1.25 1.25"/></svg><svg style="left:851.10px;top:298.30px" width="11.4" height="11.4" viewBox="0 0 11.4 11.4"><rect x="0.8" y="0.8" width="9.8" height="9.8" fill="#fff" stroke="#858585" stroke-width="1.6"/><path d="M2.8 5.7 H8.6 M5.7 2.8 V8.6" stroke="#111" stroke-width="1.3"/></svg><svg style="left:872.30px;top:298.60px" width="18" height="16" viewBox="0 0 18 16"><path d="M0.2 3.0 H2.9 V0.7 H7.7 V3.0 H10.8 V0.7 H15 V3.0 H17.6" fill="none" stroke="#333" stroke-width="1.25"/><path d="M-0.30 8.40 H3.70 V6.00 L7.90 10.40 L3.70 14.80 V12.40 H-0.30 Z" fill="#6fb000"/></svg><svg style="left:839.15px;top:330.90px" width="7.20" height="1.2"><line x1="0" y1="0.6" x2="7.20" y2="0.6" stroke="#666" stroke-width="1.3" stroke-dasharray="1.25 1.25"/></svg><svg style="left:826.15px;top:325.80px" width="11.4" height="11.4" viewBox="0 0 11.4 11.4"><rect x="0.8" y="0.8" width="9.8" height="9.8" fill="#fff" stroke="#858585" stroke-width="1.6"/><path d="M2.8 5.7 H8.6" stroke="#111" stroke-width="1.3"/></svg><svg style="left:847.35px;top:326.10px" width="18" height="16" viewBox="0 0 18 16"><path d="M0.2 3.0 H2.9 V0.7 H7.7 V3.0 H10.8 V0.7 H15 V3.0 H17.6" fill="none" stroke="#333" stroke-width="1.25"/><path d="M9.90 8.40 H13.70 V6.00 L17.90 10.40 L13.70 14.80 V12.40 H9.90 Z" fill="#e01b1b"/></svg><svg style="left:864.10px;top:358.40px" width="7.20" height="1.2"><line x1="0" y1="0.6" x2="7.20" y2="0.6" stroke="#666" stroke-width="1.3" stroke-dasharray="1.25 1.25"/></svg><svg style="left:851.10px;top:353.30px" width="11.4" height="11.4" viewBox="0 0 11.4 11.4"><rect x="0.8" y="0.8" width="9.8" height="9.8" fill="#fff" stroke="#858585" stroke-width="1.6"/><path d="M2.8 5.7 H8.6 M5.7 2.8 V8.6" stroke="#111" stroke-width="1.3"/></svg><svg style="left:872.30px;top:353.60px" width="18" height="16" viewBox="0 0 18 16"><path d="M0.2 3.0 H2.9 V0.7 H7.7 V3.0 H10.8 V0.7 H15 V3.0 H17.6" fill="none" stroke="#333" stroke-width="1.25"/><path d="M9.90 8.40 H13.70 V6.00 L17.90 10.40 L13.70 14.80 V12.40 H9.90 Z" fill="#e01b1b"/></svg><svg style="left:839.15px;top:385.90px" width="7.20" height="1.2"><line x1="0" y1="0.6" x2="7.20" y2="0.6" stroke="#666" stroke-width="1.3" stroke-dasharray="1.25 1.25"/></svg><svg style="left:826.15px;top:380.80px" width="11.4" height="11.4" viewBox="0 0 11.4 11.4"><rect x="0.8" y="0.8" width="9.8" height="9.8" fill="#fff" stroke="#858585" stroke-width="1.6"/><path d="M2.8 5.7 H8.6" stroke="#111" stroke-width="1.3"/></svg><svg style="left:847.35px;top:378.20px" width="18" height="14" viewBox="0 0 18 14"><rect x="0" y="0" width="17.6" height="13.8" fill="#74ac00"/><path d="M1.50 5.40 H6.50 V3.80 L10.40 7.15 L6.50 10.50 V8.90 H1.50 Z" fill="#fff"/></svg><svg style="left:864.10px;top:413.40px" width="7.20" height="1.2"><line x1="0" y1="0.6" x2="7.20" y2="0.6" stroke="#666" stroke-width="1.3" stroke-dasharray="1.25 1.25"/></svg><svg style="left:851.10px;top:408.30px" width="11.4" height="11.4" viewBox="0 0 11.4 11.4"><rect x="0.8" y="0.8" width="9.8" height="9.8" fill="#fff" stroke="#858585" stroke-width="1.6"/><path d="M2.8 5.7 H8.6" stroke="#111" stroke-width="1.3"/></svg><svg style="left:872.30px;top:406.00px" width="18" height="14" viewBox="0 0 18 14"><rect x="0" y="0" width="17.7" height="13.7" fill="#404040"/><path d="M0.00 5.15 H4.50 V3.50 L10.50 6.90 L4.50 10.30 V8.65 H0.00 Z" fill="#55bbff"/></svg><svg style="left:889.05px;top:440.90px" width="7.20" height="1.2"><line x1="0" y1="0.6" x2="7.20" y2="0.6" stroke="#666" stroke-width="1.3" stroke-dasharray="1.25 1.25"/></svg><svg style="left:876.05px;top:435.80px" width="11.4" height="11.4" viewBox="0 0 11.4 11.4"><rect x="0.8" y="0.8" width="9.8" height="9.8" fill="#fff" stroke="#858585" stroke-width="1.6"/><path d="M2.8 5.7 H8.6 M5.7 2.8 V8.6" stroke="#111" stroke-width="1.3"/></svg><svg style="left:896.05px;top:431.90px" width="20" height="19" viewBox="0 0 20 19"><path d="M0.00 0.20 H4.37 L8.40 4.55 L4.37 8.90 H0.00 Z" fill="#55bbff"/><path d="M8.0 4.55 H9.4 V13.6 H12" fill="none" stroke="#404040" stroke-width="1.3"/><path d="M11.5 9.1 H15.2 Q18.9 11.2 18.9 13.5 Q18.9 15.8 15.2 17.9 H11.5 Z" fill="#404040"/></svg><svg style="left:864.10px;top:468.40px" width="7.20" height="1.2"><line x1="0" y1="0.6" x2="7.20" y2="0.6" stroke="#666" stroke-width="1.3" stroke-dasharray="1.25 1.25"/></svg><svg style="left:851.10px;top:463.30px" width="11.4" height="11.4" viewBox="0 0 11.4 11.4"><rect x="0.8" y="0.8" width="9.8" height="9.8" fill="#fff" stroke="#858585" stroke-width="1.6"/><path d="M2.8 5.7 H8.6" stroke="#111" stroke-width="1.3"/></svg><svg style="left:872.30px;top:461.00px" width="18" height="14" viewBox="0 0 18 14"><rect x="0" y="0" width="17.7" height="13.7" fill="#404040"/><path d="M0.00 5.15 H4.50 V3.50 L10.50 6.90 L4.50 10.30 V8.65 H0.00 Z" fill="#ffa020"/></svg><svg style="left:889.05px;top:495.90px" width="7.20" height="1.2"><line x1="0" y1="0.6" x2="7.20" y2="0.6" stroke="#666" stroke-width="1.3" stroke-dasharray="1.25 1.25"/></svg><svg style="left:876.05px;top:490.80px" width="11.4" height="11.4" viewBox="0 0 11.4 11.4"><rect x="0.8" y="0.8" width="9.8" height="9.8" fill="#fff" stroke="#858585" stroke-width="1.6"/><path d="M2.8 5.7 H8.6 M5.7 2.8 V8.6" stroke="#111" stroke-width="1.3"/></svg><svg style="left:896.05px;top:486.90px" width="20" height="19" viewBox="0 0 20 19"><path d="M0.00 0.20 H4.37 L8.40 4.55 L4.37 8.90 H0.00 Z" fill="#ffa020"/><path d="M8.0 4.55 H9.4 V13.6 H12" fill="none" stroke="#404040" stroke-width="1.3"/><path d="M11.5 9.1 H15.2 Q18.9 11.2 18.9 13.5 Q18.9 15.8 15.2 17.9 H11.5 Z" fill="#404040"/></svg><svg style="left:857.30px;top:523.40px" width="14.00" height="1.2"><line x1="0" y1="0.6" x2="14.00" y2="0.6" stroke="#666" stroke-width="1.3" stroke-dasharray="1.25 1.25"/></svg><svg style="left:872.30px;top:515.70px" width="18" height="14" viewBox="0 0 18 14"><rect x="0" y="0" width="17.6" height="13.8" fill="#74ac00"/><path d="M1.50 5.40 H6.50 V3.80 L10.40 7.15 L6.50 10.50 V8.90 H1.50 Z" fill="#fff"/></svg><svg style="left:839.15px;top:550.90px" width="7.20" height="1.2"><line x1="0" y1="0.6" x2="7.20" y2="0.6" stroke="#666" stroke-width="1.3" stroke-dasharray="1.25 1.25"/></svg><svg style="left:826.15px;top:545.80px" width="11.4" height="11.4" viewBox="0 0 11.4 11.4"><rect x="0.8" y="0.8" width="9.8" height="9.8" fill="#fff" stroke="#858585" stroke-width="1.6"/><path d="M2.8 5.7 H8.6" stroke="#111" stroke-width="1.3"/></svg><svg style="left:847.35px;top:543.50px" width="18" height="14" viewBox="0 0 18 14"><rect x="0" y="0" width="17.6" height="13.8" fill="#74ac00"/><path d="M7.70 5.10 H12.50 V3.50 L16.40 6.85 L12.50 10.20 V8.60 H7.70 Z" fill="#fff"/></svg><svg style="left:864.10px;top:578.40px" width="7.20" height="1.2"><line x1="0" y1="0.6" x2="7.20" y2="0.6" stroke="#666" stroke-width="1.3" stroke-dasharray="1.25 1.25"/></svg><svg style="left:851.10px;top:573.30px" width="11.4" height="11.4" viewBox="0 0 11.4 11.4"><rect x="0.8" y="0.8" width="9.8" height="9.8" fill="#fff" stroke="#858585" stroke-width="1.6"/><path d="M2.8 5.7 H8.6" stroke="#111" stroke-width="1.3"/></svg><svg style="left:872.30px;top:571.00px" width="18" height="14" viewBox="0 0 18 14"><rect x="0" y="0" width="17.6" height="13.8" fill="#74ac00"/><path d="M7.70 5.10 H12.50 V3.50 L16.40 6.85 L12.50 10.20 V8.60 H7.70 Z" fill="#fff"/></svg><svg style="left:889.05px;top:605.90px" width="7.20" height="1.2"><line x1="0" y1="0.6" x2="7.20" y2="0.6" stroke="#666" stroke-width="1.3" stroke-dasharray="1.25 1.25"/></svg><svg style="left:876.05px;top:600.80px" width="11.4" height="11.4" viewBox="0 0 11.4 11.4"><rect x="0.8" y="0.8" width="9.8" height="9.8" fill="#fff" stroke="#858585" stroke-width="1.6"/><path d="M2.8 5.7 H8.6 M5.7 2.8 V8.6" stroke="#111" stroke-width="1.3"/></svg><svg style="left:896.05px;top:596.90px" width="20" height="19" viewBox="0 0 20 19"><path d="M0.00 0.20 H4.37 L8.40 4.55 L4.37 8.90 H0.00 Z" fill="#404040"/><path d="M8.0 4.55 H9.4 V13.6 H12" fill="none" stroke="#404040" stroke-width="1.3"/><path d="M11.5 9.1 H15.2 Q18.9 11.2 18.9 13.5 Q18.9 15.8 15.2 17.9 H11.5 Z" fill="#6fae00"/></svg><svg style="left:864.10px;top:633.40px" width="7.20" height="1.2"><line x1="0" y1="0.6" x2="7.20" y2="0.6" stroke="#666" stroke-width="1.3" stroke-dasharray="1.25 1.25"/></svg><svg style="left:851.10px;top:628.30px" width="11.4" height="11.4" viewBox="0 0 11.4 11.4"><rect x="0.8" y="0.8" width="9.8" height="9.8" fill="#fff" stroke="#858585" stroke-width="1.6"/><path d="M2.8 5.7 H8.6" stroke="#111" stroke-width="1.3"/></svg><svg style="left:872.30px;top:626.00px" width="18" height="14" viewBox="0 0 18 14"><rect x="0" y="0" width="17.6" height="13.8" fill="#74ac00"/><path d="M7.70 5.10 H12.50 V3.50 L16.40 6.85 L12.50 10.20 V8.60 H7.70 Z" fill="#fff"/></svg><svg style="left:889.05px;top:660.90px" width="7.20" height="1.2"><line x1="0" y1="0.6" x2="7.20" y2="0.6" stroke="#666" stroke-width="1.3" stroke-dasharray="1.25 1.25"/></svg><svg style="left:876.05px;top:655.80px" width="11.4" height="11.4" viewBox="0 0 11.4 11.4"><rect x="0.8" y="0.8" width="9.8" height="9.8" fill="#fff" stroke="#858585" stroke-width="1.6"/><path d="M2.8 5.7 H8.6 M5.7 2.8 V8.6" stroke="#111" stroke-width="1.3"/></svg><svg style="left:896.05px;top:651.90px" width="20" height="19" viewBox="0 0 20 19"><path d="M0.00 0.20 H4.37 L8.40 4.55 L4.37 8.90 H0.00 Z" fill="#404040"/><path d="M8.0 4.55 H9.4 V13.6 H12" fill="none" stroke="#404040" stroke-width="1.3"/><path d="M11.5 9.1 H15.2 Q18.9 11.2 18.9 13.5 Q18.9 15.8 15.2 17.9 H11.5 Z" fill="#6fae00"/></svg><svg style="left:864.10px;top:688.40px" width="7.20" height="1.2"><line x1="0" y1="0.6" x2="7.20" y2="0.6" stroke="#666" stroke-width="1.3" stroke-dasharray="1.25 1.25"/></svg><svg style="left:851.10px;top:683.30px" width="11.4" height="11.4" viewBox="0 0 11.4 11.4"><rect x="0.8" y="0.8" width="9.8" height="9.8" fill="#fff" stroke="#858585" stroke-width="1.6"/><path d="M2.8 5.7 H8.6" stroke="#111" stroke-width="1.3"/></svg><svg style="left:872.30px;top:681.00px" width="18" height="14" viewBox="0 0 18 14"><rect x="0" y="0" width="17.6" height="13.8" fill="#74ac00"/><path d="M7.70 5.10 H12.50 V3.50 L16.40 6.85 L12.50 10.20 V8.60 H7.70 Z" fill="#fff"/></svg><svg style="left:889.05px;top:715.90px" width="7.20" height="1.2"><line x1="0" y1="0.6" x2="7.20" y2="0.6" stroke="#666" stroke-width="1.3" stroke-dasharray="1.25 1.25"/></svg><svg style="left:876.05px;top:710.80px" width="11.4" height="11.4" viewBox="0 0 11.4 11.4"><rect x="0.8" y="0.8" width="9.8" height="9.8" fill="#fff" stroke="#858585" stroke-width="1.6"/><path d="M2.8 5.7 H8.6 M5.7 2.8 V8.6" stroke="#111" stroke-width="1.3"/></svg><svg style="left:896.05px;top:706.90px" width="20" height="19" viewBox="0 0 20 19"><path d="M0.00 0.20 H4.37 L8.40 4.55 L4.37 8.90 H0.00 Z" fill="#404040"/><path d="M8.0 4.55 H9.4 V13.6 H12" fill="none" stroke="#404040" stroke-width="1.3"/><path d="M11.5 9.1 H15.2 Q18.9 11.2 18.9 13.5 Q18.9 15.8 15.2 17.9 H11.5 Z" fill="#6fae00"/></svg><svg style="left:839.15px;top:743.40px" width="7.20" height="1.2"><line x1="0" y1="0.6" x2="7.20" y2="0.6" stroke="#666" stroke-width="1.3" stroke-dasharray="1.25 1.25"/></svg><svg style="left:826.15px;top:738.30px" width="11.4" height="11.4" viewBox="0 0 11.4 11.4"><rect x="0.8" y="0.8" width="9.8" height="9.8" fill="#fff" stroke="#858585" stroke-width="1.6"/><path d="M2.8 5.7 H8.6" stroke="#111" stroke-width="1.3"/></svg><svg style="left:846.05px;top:734.20px" width="19" height="18" viewBox="0 0 19 18"><rect x="0.75" y="0.85" width="17.5" height="16.3" fill="#fbfbfb" stroke="#111" stroke-width="1.5"/><rect x="1.5" y="1.6" width="7.6" height="14.8" fill="#00a9dc"/><path d="M9.5 1 V17" stroke="#111" stroke-width="1.3"/></svg><svg style="left:864.10px;top:770.90px" width="7.20" height="1.2"><line x1="0" y1="0.6" x2="7.20" y2="0.6" stroke="#666" stroke-width="1.3" stroke-dasharray="1.25 1.25"/></svg><svg style="left:851.10px;top:765.80px" width="11.4" height="11.4" viewBox="0 0 11.4 11.4"><rect x="0.8" y="0.8" width="9.8" height="9.8" fill="#fff" stroke="#858585" stroke-width="1.6"/><path d="M2.8 5.7 H8.6" stroke="#111" stroke-width="1.3"/></svg><svg style="left:871.20px;top:763.30px" width="26" height="22" viewBox="0 0 26 22"><rect x="1.6" y="0.2" width="17" height="2.1" fill="#4c4c4c"/><rect x="0" y="3.9" width="19.9" height="8.9" rx="1" fill="#6a6a6a"/><rect x="1.6" y="14.2" width="13" height="2.1" fill="#4c4c4c"/><text x="3.4" y="11.4" font-family="Liberation Sans, sans-serif" font-size="8.4" font-weight="bold" fill="#fff" textLength="12.2" lengthAdjust="spacingAndGlyphs">ReL</text><circle cx="20.7" cy="15.9" r="4.9" fill="#5cb947"/></svg><svg style="left:889.05px;top:798.40px" width="7.20" height="1.2"><line x1="0" y1="0.6" x2="7.20" y2="0.6" stroke="#666" stroke-width="1.3" stroke-dasharray="1.25 1.25"/></svg><svg style="left:876.05px;top:793.30px" width="11.4" height="11.4" viewBox="0 0 11.4 11.4"><rect x="0.8" y="0.8" width="9.8" height="9.8" fill="#fff" stroke="#858585" stroke-width="1.6"/><path d="M2.8 5.7 H8.6 M5.7 2.8 V8.6" stroke="#111" stroke-width="1.3"/></svg><svg style="left:897.25px;top:793.60px" width="18" height="16" viewBox="0 0 18 16"><path d="M0.2 3.0 H2.9 V0.7 H7.7 V3.0 H10.8 V0.7 H15 V3.0 H17.6" fill="none" stroke="#333" stroke-width="1.25"/><path d="M9.90 8.40 H13.70 V6.00 L17.90 10.40 L13.70 14.80 V12.40 H9.90 Z" fill="#e01b1b"/></svg><svg style="left:889.05px;top:825.90px" width="7.20" height="1.2"><line x1="0" y1="0.6" x2="7.20" y2="0.6" stroke="#666" stroke-width="1.3" stroke-dasharray="1.25 1.25"/></svg><svg style="left:876.05px;top:820.80px" width="11.4" height="11.4" viewBox="0 0 11.4 11.4"><rect x="0.8" y="0.8" width="9.8" height="9.8" fill="#fff" stroke="#858585" stroke-width="1.6"/><path d="M2.8 5.7 H8.6 M5.7 2.8 V8.6" stroke="#111" stroke-width="1.3"/></svg><svg style="left:897.25px;top:821.10px" width="18" height="16" viewBox="0 0 18 16"><path d="M0.2 3.0 H2.9 V0.7 H7.7 V3.0 H10.8 V0.7 H15 V3.0 H17.6" fill="none" stroke="#333" stroke-width="1.25"/><path d="M9.90 8.40 H13.70 V6.00 L17.90 10.40 L13.70 14.80 V12.40 H9.90 Z" fill="#e01b1b"/></svg><svg style="left:775.40px;top:843.20px" width="20" height="17" viewBox="0 0 20 17"><rect x="0.6" y="4.9" width="13" height="13" fill="#f6f6f6" stroke="#8a8a8a" stroke-width="1.2"/><path d="M3 9.8 H4.6 M6.0 9.8 H11.4 M3 12.6 H4.6 M6.0 12.6 H11.4" stroke="#8a8a8a" stroke-width="1.1"/><path d="M2.6 8.0 L9.2 1.6 L14.2 6.2" fill="none" stroke="#9ccf3a" stroke-width="2.6" stroke-linejoin="miter"/><path d="M9.0 1.3 H16.4" stroke="#86bf1e" stroke-width="1.6"/><path d="M19.6 0 V8.8 L14.2 3.6 Z" fill="#7ab800"/></svg><svg style="left:877.80px;top:843.20px" width="20" height="17" viewBox="0 0 20 17"><rect x="0.6" y="4.9" width="13" height="13" fill="#f6f6f6" stroke="#8a8a8a" stroke-width="1.2"/><path d="M3 9.8 H4.6 M6.0 9.8 H11.4 M3 12.6 H4.6 M6.0 12.6 H11.4" stroke="#8a8a8a" stroke-width="1.1"/><path d="M2.6 8.0 L9.2 1.6 L14.2 6.2" fill="none" stroke="#9ccf3a" stroke-width="2.6" stroke-linejoin="miter"/><path d="M9.0 1.3 H16.4" stroke="#86bf1e" stroke-width="1.6"/><path d="M19.6 0 V8.8 L14.2 3.6 Z" fill="#7ab800"/></svg><svg style="left:982.40px;top:843.20px" width="20" height="17" viewBox="0 0 20 17"><rect x="0.6" y="4.9" width="13" height="13" fill="#f6f6f6" stroke="#8a8a8a" stroke-width="1.2"/><path d="M3 9.8 H4.6 M6.0 9.8 H11.4 M3 12.6 H4.6 M6.0 12.6 H11.4" stroke="#8a8a8a" stroke-width="1.1"/><path d="M2.6 8.0 L9.2 1.6 L14.2 6.2" fill="none" stroke="#9ccf3a" stroke-width="2.6" stroke-linejoin="miter"/><path d="M9.0 1.3 H16.4" stroke="#86bf1e" stroke-width="1.6"/><path d="M19.6 0 V8.8 L14.2 3.6 Z" fill="#7ab800"/></svg><svg style="left:1064.00px;top:843.20px" width="20" height="17" viewBox="0 0 20 17"><rect x="0.6" y="4.9" width="13" height="13" fill="#f6f6f6" stroke="#8a8a8a" stroke-width="1.2"/><path d="M3 9.8 H4.6 M6.0 9.8 H11.4 M3 12.6 H4.6 M6.0 12.6 H11.4" stroke="#8a8a8a" stroke-width="1.1"/><path d="M2.6 8.0 L9.2 1.6 L14.2 6.2" fill="none" stroke="#9ccf3a" stroke-width="2.6" stroke-linejoin="miter"/><path d="M9.0 1.3 H16.4" stroke="#86bf1e" stroke-width="1.6"/><path d="M19.6 0 V8.8 L14.2 3.6 Z" fill="#7ab800"/></svg><span class="t" style="left:7.00px;top:-15.50px;font-size:15.0px;color:#1a1a1a;letter-spacing:-0.360px;">Eigenschaften (Virtueller UDP Eingang Befehl)</span><span class="t" style="left:774.00px;top:-15.50px;font-size:15.0px;color:#1a1a1a;letter-spacing:-0.508px;">Peripherie</span><span class="t" style="left:7.00px;top:37.00px;font-size:15.0px;color:#1a1a1a;letter-spacing:-0.199px;">Eigenschaft</span><span class="t" style="left:388.00px;top:37.00px;font-size:15.0px;color:#1a1a1a;letter-spacing:0.631px;">Wert</span><span class="t" style="left:29.10px;top:62.27px;font-size:15.0px;color:#1a1a1a;font-weight:bold;letter-spacing:-0.186px;">Allgemein</span><span class="t" style="left:29.10px;top:86.01px;font-size:15.0px;color:#1a1a1a;letter-spacing:-0.203px;">Bezeichnung</span><span class="t" style="left:387.50px;top:86.01px;font-size:15.0px;color:#1a1a1a;letter-spacing:0.016px;">Charging Current</span><span class="t" style="left:29.10px;top:109.75px;font-size:15.0px;color:#1a1a1a;letter-spacing:-0.139px;">Beschreibung</span><span class="t" style="left:29.10px;top:133.49px;font-size:15.0px;color:#1a1a1a;letter-spacing:0.015px;">Hinweis-Text</span><span class="t" style="left:387.50px;top:133.49px;font-size:15.0px;color:#1a1a1a;letter-spacing:-0.272px;">Bearbeiten...</span><span class="t" style="left:29.10px;top:157.23px;font-size:15.0px;color:#8a8a8a;letter-spacing:-0.272px;">Anschluss</span><span class="t" style="left:387.50px;top:157.23px;font-size:15.0px;color:#8a8a8a;letter-spacing:-0.880px;">VUI2.VCI15</span><span class="t" style="left:29.10px;top:180.97px;font-size:15.0px;color:#1a1a1a;letter-spacing:-0.127px;">Kategorie</span><span class="t" style="left:387.50px;top:180.97px;font-size:15.0px;color:#1a1a1a;letter-spacing:0.126px;">Nicht zugeordnet</span><span class="t" style="left:29.10px;top:204.71px;font-size:15.0px;color:#1a1a1a;letter-spacing:-0.505px;">Raum</span><span class="t" style="left:387.50px;top:204.71px;font-size:15.0px;color:#1a1a1a;letter-spacing:-0.549px;">Garage</span><span class="t" style="left:29.10px;top:228.45px;font-size:15.0px;color:#8a8a8a;letter-spacing:0.228px;">Objekttyp</span><span class="t" style="left:387.50px;top:228.45px;font-size:15.0px;color:#8a8a8a;letter-spacing:-0.211px;">Virtueller UDP Eingang Befehl</span><span class="t" style="left:29.10px;top:252.19px;font-size:15.0px;color:#1a1a1a;font-weight:bold;letter-spacing:-0.574px;">Visualisierung</span><span class="t" style="left:52.50px;top:275.93px;font-size:15.0px;color:#1a1a1a;letter-spacing:-0.270px;">Verwenden</span><span class="t" style="left:52.50px;top:299.67px;font-size:15.0px;color:#1a1a1a;letter-spacing:-0.045px;">Visualisierungskennwort</span><span class="t" style="left:29.10px;top:323.41px;font-size:15.0px;color:#1a1a1a;letter-spacing:0.054px;">Symbol</span><span class="t" style="left:415.00px;top:323.41px;font-size:15.0px;color:#1a1a1a;letter-spacing:-0.297px;">Bearbeiten...</span><span class="t" style="left:29.10px;top:347.15px;font-size:15.0px;color:#1a1a1a;letter-spacing:-0.077px;">Bewertung</span><span class="t" style="left:52.50px;top:370.89px;font-size:15.0px;color:#1a1a1a;letter-spacing:-0.221px;">Als Favorit anzeigen</span><span class="t" style="left:29.10px;top:394.63px;font-size:15.0px;color:#1a1a1a;letter-spacing:-0.218px;">Verlinkte Bausteine</span><span class="t" style="left:387.50px;top:394.63px;font-size:15.0px;color:#3b8bff;letter-spacing:-0.136px;">Auswählen...</span><span class="t" style="left:29.10px;top:418.37px;font-size:15.0px;color:#1a1a1a;font-weight:bold;letter-spacing:-0.086px;">Statistiken</span><span class="t" style="left:52.50px;top:442.11px;font-size:15.0px;color:#1a1a1a;letter-spacing:-0.114px;">Statistik</span><span class="t" style="left:29.10px;top:465.85px;font-size:15.0px;color:#1a1a1a;font-weight:bold;letter-spacing:-0.114px;">Berechtigungen</span><span class="t" style="left:29.10px;top:489.59px;font-size:15.0px;color:#1a1a1a;letter-spacing:-0.116px;">Berechtigte Benutzer / Gruppen</span><span class="t" style="left:387.50px;top:489.59px;font-size:15.0px;color:#1a1a1a;letter-spacing:-0.280px;">Bearbeiten...</span><span class="t" style="left:29.10px;top:513.33px;font-size:15.0px;color:#1a1a1a;font-weight:bold;letter-spacing:-0.470px;">Einstellungen</span><span class="t" style="left:29.10px;top:537.07px;font-size:15.0px;color:#1a1a1a;letter-spacing:-0.645px;">Senderadresse</span><span class="t" style="left:29.10px;top:560.81px;font-size:15.0px;color:#1a1a1a;letter-spacing:-0.156px;">Befehlserkennung</span><span class="t" style="left:387.50px;top:560.81px;font-size:15.0px;color:#1a1a1a;letter-spacing:0.051px;">MQTT:\iwarp2/YBr/evse/global_current/current...</span><span class="t" style="left:52.50px;top:584.55px;font-size:15.0px;color:#1a1a1a;letter-spacing:-0.049px;">Als Digitaleingang verwenden</span><span class="t" style="left:52.50px;top:608.29px;font-size:15.0px;color:#1a1a1a;letter-spacing:-0.292px;">Fehlerausgang anzeigen</span><span class="t" style="left:52.50px;top:632.03px;font-size:15.0px;color:#1a1a1a;letter-spacing:0.011px;">Werteinterpretation mit Vorzeichen</span><span class="t" style="left:29.10px;top:655.77px;font-size:15.0px;color:#1a1a1a;font-weight:bold;letter-spacing:0.155px;">Korrektur</span><span class="t" style="left:29.10px;top:679.51px;font-size:15.0px;color:#1a1a1a;letter-spacing:-0.316px;">Eingangswert 1</span><span class="t" style="left:387.50px;top:679.51px;font-size:15.0px;color:#1a1a1a;letter-spacing:0.256px;">0</span><span class="t" style="left:29.10px;top:703.25px;font-size:15.0px;color:#1a1a1a;letter-spacing:-0.315px;">Zielwert 1</span><span class="t" style="left:387.50px;top:703.25px;font-size:15.0px;color:#1a1a1a;letter-spacing:0.256px;">0</span><span class="t" style="left:29.10px;top:726.99px;font-size:15.0px;color:#1a1a1a;letter-spacing:-0.247px;">Eingangswert 2</span><span class="t" style="left:387.50px;top:726.99px;font-size:15.0px;color:#1a1a1a;letter-spacing:-0.366px;">100</span><span class="t" style="left:29.10px;top:750.73px;font-size:15.0px;color:#1a1a1a;letter-spacing:-0.148px;">Zielwert 2</span><span class="t" style="left:387.50px;top:750.73px;font-size:15.0px;color:#1a1a1a;letter-spacing:-0.366px;">100</span><span class="t" style="left:29.10px;top:774.47px;font-size:15.0px;color:#1a1a1a;font-weight:bold;letter-spacing:-0.161px;">Logging/Mail/Call/Track</span><span class="t" style="left:29.10px;top:798.21px;font-size:15.0px;color:#1a1a1a;letter-spacing:-0.044px;">Logger</span><span class="t" style="left:387.50px;top:798.21px;font-size:15.0px;color:#1a1a1a;letter-spacing:0.132px;">nicht zugeordnet</span><span class="t" style="left:5.30px;top:828.30px;font-size:15.0px;color:#1a1a1a;font-weight:bold;letter-spacing:-0.163px;">Virtueller UDP Eingang Befehl</span><span class="t" style="left:773.90px;top:39.40px;font-size:15.0px;color:#1a1a1a;letter-spacing:-0.255px;">Kategorie:</span><span class="t" style="left:865.30px;top:39.40px;font-size:15.0px;color:#1a1a1a;letter-spacing:0.161px;">Alle</span><span class="t" style="left:1078.70px;top:39.40px;font-size:15.0px;color:#1a1a1a;letter-spacing:-0.272px;">Raum:</span><span class="t" style="left:1143.30px;top:39.40px;font-size:15.0px;color:#1a1a1a;letter-spacing:-0.709px;">Garage</span><span class="t" style="left:772.90px;top:68.40px;font-size:15.0px;color:#1a1a1a;letter-spacing:-0.075px;">Vordefinierte Filter</span><span class="t" style="left:905.60px;top:68.40px;font-size:15.0px;color:#ffffff;letter-spacing:-0.288px;">Keine Einschränkungen</span><span class="t" style="left:794.30px;top:94.50px;font-size:15.0px;color:#1a1a1a;letter-spacing:0.201px;">Automatisch filtern</span><span class="t" style="left:779.60px;top:125.90px;font-size:13.6px;color:#ffffff;letter-spacing:-0.176px;">Filter aktiv</span><span class="t" style="left:1245.40px;top:125.90px;font-size:13.4px;color:#ffffff;font-weight:bold;letter-spacing:-0.224px;">ZURÜCKSETZEN</span><span class="t" style="left:872.70px;top:157.10px;font-size:16.8px;color:#1a1a1a;letter-spacing:-0.109px;">Signal Tor geschlossen</span><span class="t" style="left:1047.40px;top:157.10px;font-size:16.8px;color:#8a8a8a;letter-spacing:-0.465px;">(Garage)</span><span class="t" style="left:872.70px;top:184.60px;font-size:16.8px;color:#1a1a1a;letter-spacing:0.099px;">Signal Tor offen</span><span class="t" style="left:995.20px;top:184.60px;font-size:16.8px;color:#8a8a8a;letter-spacing:-0.294px;">(Garage)</span><span class="t" style="left:847.60px;top:212.10px;font-size:16.8px;color:#1a1a1a;letter-spacing:-0.584px;">Trick</span><span class="t" style="left:886.00px;top:212.10px;font-size:16.8px;color:#8a8a8a;letter-spacing:0.062px;">(Schaltschrank R01 P01)(~33% Auslastung)</span><span class="t" style="left:872.70px;top:239.60px;font-size:16.8px;color:#1a1a1a;letter-spacing:0.097px;">Digitale Eingänge</span><span class="t" style="left:897.80px;top:267.10px;font-size:16.8px;color:#1a1a1a;letter-spacing:0.049px;">Garage offen</span><span class="t" style="left:1001.50px;top:267.10px;font-size:16.8px;color:#8a8a8a;letter-spacing:-0.199px;">(I1) (Garage)</span><span class="t" style="left:897.80px;top:294.60px;font-size:16.8px;color:#1a1a1a;letter-spacing:-0.195px;">Garage zu</span><span class="t" style="left:980.60px;top:294.60px;font-size:16.8px;color:#8a8a8a;letter-spacing:-0.199px;">(I2) (Garage)</span><span class="t" style="left:872.70px;top:322.10px;font-size:16.8px;color:#1a1a1a;letter-spacing:0.263px;">Digitale Ausgänge</span><span class="t" style="left:897.80px;top:349.60px;font-size:16.8px;color:#1a1a1a;letter-spacing:0.010px;">Licht Garage</span><span class="t" style="left:999.00px;top:349.60px;font-size:16.8px;color:#8a8a8a;letter-spacing:-0.156px;">(Q7) (Garage)</span><span class="t" style="left:872.70px;top:377.10px;font-size:16.8px;color:#1a1a1a;letter-spacing:0.106px;">Virtuelle Eingänge</span><span class="t" style="left:897.80px;top:404.60px;font-size:16.8px;color:#1a1a1a;letter-spacing:0.022px;">Eingang VUI1</span><span class="t" style="left:1007.80px;top:404.60px;font-size:16.8px;color:#8a8a8a;letter-spacing:-0.149px;">(VI)</span><span class="t" style="left:922.90px;top:432.10px;font-size:16.8px;color:#1a1a1a;font-weight:bold;letter-spacing:0.352px;">Charging Current</span><span class="t" style="left:1071.90px;top:432.10px;font-size:16.8px;color:#707070;font-weight:bold;letter-spacing:0.515px;">(VI) (Garage)</span><span class="t" style="left:897.80px;top:459.60px;font-size:16.8px;color:#1a1a1a;letter-spacing:0.206px;">Warp 2 Pro</span><span class="t" style="left:989.40px;top:459.60px;font-size:16.8px;color:#8a8a8a;letter-spacing:-0.349px;">(VI)</span><span class="t" style="left:922.90px;top:487.10px;font-size:16.8px;color:#1a1a1a;letter-spacing:0.014px;">Status Wallbox</span><span class="t" style="left:1039.40px;top:487.10px;font-size:16.8px;color:#8a8a8a;letter-spacing:-0.288px;">(VI) (Garage)</span><span class="t" style="left:897.80px;top:514.60px;font-size:16.8px;color:#1a1a1a;letter-spacing:-0.107px;">warp2_YBr_evse_global_current_current</span><span class="t" style="left:1204.40px;top:514.60px;font-size:16.8px;color:#8a8a8a;letter-spacing:-0.255px;">(VI) (Garage)</span><span class="t" style="left:872.70px;top:542.10px;font-size:16.8px;color:#1a1a1a;letter-spacing:0.256px;">Virtuelle Ausgänge</span><span class="t" style="left:897.80px;top:569.60px;font-size:16.8px;color:#1a1a1a;letter-spacing:-0.384px;">SendWarp2HTTP</span><span class="t" style="left:1030.50px;top:569.60px;font-size:16.8px;color:#8a8a8a;letter-spacing:-0.163px;">(VQ) (Garage)</span><span class="t" style="left:922.90px;top:597.10px;font-size:16.8px;color:#1a1a1a;letter-spacing:-0.035px;">Befehl VCQ7</span><span class="t" style="left:1025.50px;top:597.10px;font-size:16.8px;color:#8a8a8a;letter-spacing:-0.246px;">(VQ) (Garage)</span><span class="t" style="left:897.80px;top:624.60px;font-size:16.8px;color:#1a1a1a;letter-spacing:-0.018px;">Warp2MQTT</span><span class="t" style="left:999.00px;top:624.60px;font-size:16.8px;color:#8a8a8a;letter-spacing:-0.013px;">(VQ)</span><span class="t" style="left:922.90px;top:652.10px;font-size:16.8px;color:#1a1a1a;letter-spacing:0.040px;">Stromsetzen</span><span class="t" style="left:1023.00px;top:652.10px;font-size:16.8px;color:#8a8a8a;letter-spacing:-0.204px;">(VQ) (Garage)</span><span class="t" style="left:897.80px;top:679.60px;font-size:16.8px;color:#1a1a1a;letter-spacing:-0.661px;">WLED</span><span class="t" style="left:949.10px;top:679.60px;font-size:16.8px;color:#8a8a8a;letter-spacing:-0.196px;">(VQ) (Garage)</span><span class="t" style="left:922.90px;top:707.10px;font-size:16.8px;color:#1a1a1a;letter-spacing:-0.271px;">LED Leiste Garage</span><span class="t" style="left:1067.10px;top:707.10px;font-size:16.8px;color:#8a8a8a;letter-spacing:-0.212px;">(VQ) (Garage)</span><span class="t" style="left:872.70px;top:734.60px;font-size:16.8px;color:#1a1a1a;letter-spacing:0.068px;">Link</span><span class="t" style="left:909.20px;top:734.60px;font-size:16.8px;color:#8a8a8a;letter-spacing:0.224px;">(9/30 Geräte)</span><span class="t" style="left:897.80px;top:762.10px;font-size:16.8px;color:#1a1a1a;letter-spacing:-0.298px;">Relay Extension</span><span class="t" style="left:1020.20px;top:762.10px;font-size:16.8px;color:#8a8a8a;letter-spacing:-0.088px;">(Schaltschrank R01 P02)</span><span class="t" style="left:922.90px;top:789.60px;font-size:16.8px;color:#1a1a1a;letter-spacing:-0.225px;">Garage schließen</span><span class="t" style="left:1057.50px;top:789.60px;font-size:16.8px;color:#8a8a8a;letter-spacing:-0.090px;">(Q3) (Garage)</span><span class="t" style="left:922.90px;top:817.10px;font-size:16.8px;color:#1a1a1a;letter-spacing:0.107px;">Garage Öffnen</span><span class="t" style="left:1040.40px;top:817.10px;font-size:16.8px;color:#8a8a8a;letter-spacing:-0.165px;">(Q6) (Garage)</span><span class="t" style="left:798.80px;top:842.70px;font-size:13.2px;color:#484852;font-weight:bold;letter-spacing:-0.035px;">Peripherie</span><span class="t" style="left:900.80px;top:842.70px;font-size:13.2px;color:#484852;font-weight:bold;letter-spacing:-0.067px;">Programm</span><span class="t" style="left:1005.40px;top:842.70px;font-size:13.2px;color:#484852;font-weight:bold;letter-spacing:-0.096px;">Räume</span><span class="t" style="left:1087.00px;top:842.70px;font-size:13.2px;color:#484852;font-weight:bold;letter-spacing:-0.039px;">Geräte</span></div></body></html>
